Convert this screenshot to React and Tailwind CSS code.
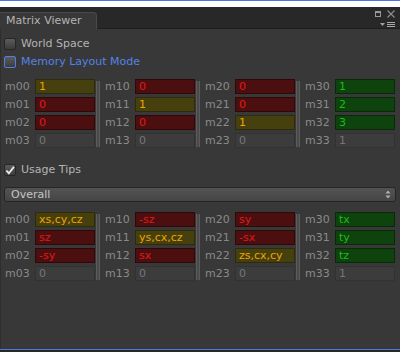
import React from 'react'

const font = { fontFamily: '"DejaVu Sans", Verdana, sans-serif' }

const tone = {
  y: 'bg-[#46400e] border-[#2f2b08] text-[#f2a200]',
  r: 'bg-[#4b0f0f] border-[#2f0909] text-[#e31717]',
  g: 'bg-[#0e430e] border-[#092909] text-[#19bd19]',
  n: 'bg-[#3c3c3c] border-[#323232] text-[#767676]',
}

const identity = [
  [['m00', '1', 'y'], ['m10', '0', 'r'], ['m20', '0', 'r'], ['m30', '1', 'g']],
  [['m01', '0', 'r'], ['m11', '1', 'y'], ['m21', '0', 'r'], ['m31', '2', 'g']],
  [['m02', '0', 'r'], ['m12', '0', 'r'], ['m22', '1', 'y'], ['m32', '3', 'g']],
  [['m03', '0', 'n'], ['m13', '0', 'n'], ['m23', '0', 'n'], ['m33', '1', 'n']],
]

const tips = [
  [['m00', 'xs,cy,cz', 'y'], ['m10', '-sz', 'r'], ['m20', 'sy', 'r'], ['m30', 'tx', 'g']],
  [['m01', 'sz', 'r'], ['m11', 'ys,cx,cz', 'y'], ['m21', '-sx', 'r'], ['m31', 'ty', 'g']],
  [['m02', '-sy', 'r'], ['m12', 'sx', 'r'], ['m22', 'zs,cx,cy', 'y'], ['m32', 'tz', 'g']],
  [['m03', '0', 'n'], ['m13', '0', 'n'], ['m23', '0', 'n'], ['m33', '1', 'n']],
]

function Checkbox({ label, checked, focus }) {
  return (
    <div className="flex items-center h-[18px]">
      <div
        className={`w-[12px] h-[12px] rounded-[2px] border flex items-center justify-center bg-gradient-to-b from-[#5c5c5c] to-[#3c3c3c] ${
          focus ? 'border-[#4f7fe6]' : 'border-[#262626]'
        }`}
      >
        {checked && (
          <svg width="11" height="11" viewBox="0 0 11 11">
            <path d="M1.5 5.5 L4.2 8.5 L9.8 1.5" fill="none" stroke="#e8e8e8" strokeWidth="2" />
          </svg>
        )}
      </div>
      <span className={`ml-[5px] text-[11px] ${focus ? 'text-[#5483e6]' : 'text-[#b4b4b4]'}`}>{label}</span>
    </div>
  )
}

function Column({ cells }) {
  return (
    <div className="flex flex-col w-[95px]">
      {cells.map(([name, value, t]) => (
        <div key={name} className="flex h-[18px]">
          <span className="w-[35px] pl-[5px] text-[11px] leading-[15px] text-[#8a8a8a]">{name}</span>
          <div className={`w-[60px] h-[15px] border pl-[3px] text-[11px] leading-[13px] ${tone[t]}`}>{value}</div>
        </div>
      ))}
    </div>
  )
}

function Divider() {
  return (
    <div className="w-[5px] flex">
      <div className="ml-[1px] mt-[2px] mb-[4px] w-[4px] bg-[#4a4a4a] border-x border-[#5c5c5c]" />
    </div>
  )
}

function MatrixGrid({ rows }) {
  const cols = [0, 1, 2, 3].map(c => rows.map(r => r[c]))
  return (
    <div className="flex">
      <Column cells={cols[0]} />
      <Divider />
      <Column cells={cols[1]} />
      <Divider />
      <Column cells={cols[2]} />
      <Divider />
      <Column cells={cols[3]} />
    </div>
  )
}

export default function App() {
  return (
    <div className="w-[400px] h-[352px] flex flex-col bg-[#383838] overflow-hidden" style={font}>
      <div className="h-px bg-[#4a78d4]" />
      <div className="h-[6px] bg-white" />

      {/* title bar with tab */}
      <div className="h-[22px] flex bg-[#282828] border-b border-[#1e1e1e]">
        <div className="mt-[5px] -mb-px w-[97px] h-[17px] bg-[#383838] border-t border-r border-[#4a4a4a] rounded-tr-[4px] pl-[6px] text-[11px] leading-[16px] text-[#b4b4b4]">
          Matrix Viewer
        </div>
        <div className="flex-1" />
        <div className="flex flex-col items-end pr-[5px] pt-[3px]">
          <div className="flex items-center gap-[6px]">
            <div className="w-[6px] h-[6px] border border-[#9a9a9a] border-t-[2px]" />
            <svg width="8" height="8" viewBox="0 0 8 8">
              <path d="M0.5 0.5 L7.5 7.5 M7.5 0.5 L0.5 7.5" stroke="#8c8c8c" strokeWidth="1.2" />
            </svg>
          </div>
          <div className="flex items-center mt-[4px] gap-[2px]">
            <svg width="5" height="4" viewBox="0 0 5 4">
              <path d="M0 0 H5 L2.5 3 Z" fill="#a0a0a0" />
            </svg>
            <div className="flex flex-col gap-[1px]">
              <div className="w-[8px] h-px bg-[#a8a8a8]" />
              <div className="w-[8px] h-px bg-[#a8a8a8]" />
              <div className="w-[8px] h-px bg-[#a8a8a8]" />
            </div>
          </div>
        </div>
      </div>

      {/* body */}
      <div className="flex-1 flex flex-col border-l border-[#2e2e2e]">
        <div className="pl-[3px] pt-[6px]">
          <Checkbox label="World Space" />
          <Checkbox label="Memory Layout Mode" focus />
        </div>

        <div className="mt-[8px] -ml-px">
          <MatrixGrid rows={identity} />
        </div>

        <div className="pl-[3px] mt-[10px]">
          <Checkbox label="Usage Tips" checked />
        </div>

        <div className="mt-[8px] ml-[3px] mr-[4px] h-[15px] flex items-center rounded-[3px] border border-[#262626] bg-gradient-to-b from-[#535353] to-[#454545] pl-[6px] pr-[4px]">
          <span className="flex-1 text-[11px] leading-[13px] text-[#c4c4c4]">Overall</span>
          <svg width="6" height="9" viewBox="0 0 6 9">
            <path d="M0.5 3.5 L3 0.5 L5.5 3.5 Z M0.5 5.5 L3 8.5 L5.5 5.5 Z" fill="#b0b0b0" />
          </svg>
        </div>

        <div className="mt-[10px] -ml-px">
          <MatrixGrid rows={tips} />
        </div>

        <div className="flex-1" />
      </div>

      <div className="h-px bg-[#4a78d4]" />
      <div className="h-[2px] bg-[#282828]" />
    </div>
  )
}
